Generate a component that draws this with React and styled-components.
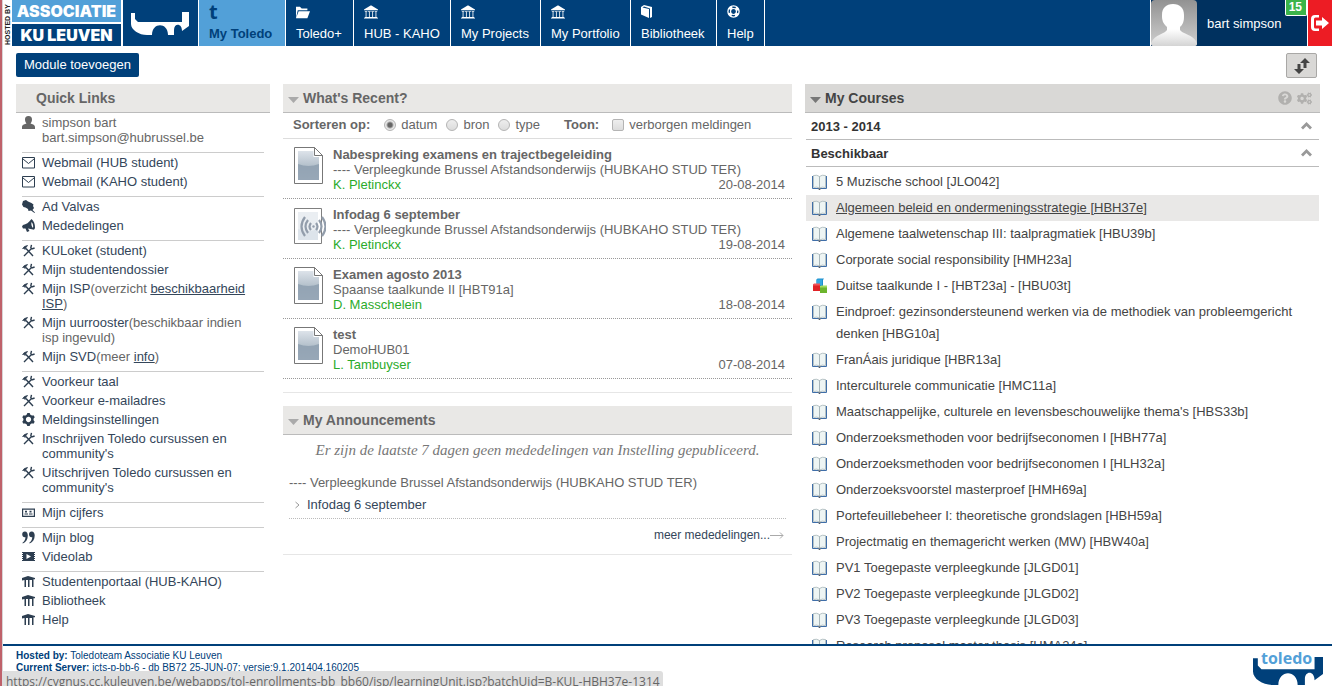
import React, { useState } from 'react';
import styled, { createGlobalStyle, css } from 'styled-components';
import { ImLibrary, ImFolderOpen, ImCog } from 'react-icons/im';
import { FaQuestionCircle, FaCogs } from 'react-icons/fa';

const GlobalStyle = createGlobalStyle`
  * {
    box-sizing: border-box;
  }

  body {
    margin: 0;
    background: #fff;
    color: #666;
    font-family: 'Liberation Sans', Arial, sans-serif;
    font-size: 13px;
    line-height: 15px;
  }

  ul {
    margin: 0;
    padding: 0;
    list-style: none;
  }

  a {
    color: #34465a;
    text-decoration: none;
  }

  button,
  input {
    margin: 0;
    font: inherit;
  }

  svg {
    display: block;
    flex: none;
  }
`;

const Page = styled.div`
  position: relative;
  display: flex;
  flex-direction: column;
  height: 100vh;
  overflow: hidden;
  border-left: 2px solid #bf616a;
  box-shadow: inset 1px 0 #d9d4d6;
  padding-left: 1px;
`;

/* header */

const TopBar = styled.header`
  display: flex;
  flex: none;
  height: 46px;
  background: #00407a;
  color: #fff;
`;

const HostedBy = styled.div`
  width: 9px;
  padding-top: 1px;
  background: #fff;
  color: #222;
  font-size: 7px;
  font-weight: bold;
  line-height: 9px;
  writing-mode: vertical-rl;
  transform: rotate(180deg);
  white-space: nowrap;
`;

const Association = styled.div`
  display: grid;
  grid-template-rows: 22px 22px;
  gap: 2px;
  width: 111px;
  border-right: 2px solid #fff;
  background: #fff;
`;

const AssociationLine = styled.div`
  display: flex;
  align-items: center;
  justify-content: center;
  background: ${(props) => props.$bg};
  font-family: Inter, 'Liberation Sans', sans-serif;
  font-size: 16px;
  font-weight: 900;
  line-height: 22px;
`;

const BridgeBox = styled.a`
  display: flex;
  width: 75px;
  padding: 12px 8px;
`;

const Nav = styled.nav`
  display: flex;
  border-left: 1px solid #fff;
`;

const Tab = styled.a`
  display: flex;
  flex-direction: column;
  justify-content: space-between;
  min-width: ${(props) => props.$width}px;
  padding: 5px 10px;
  border-right: 1px solid #fff;
  background: ${(props) => (props.$active ? '#52a0d8' : '#00407a')};
  color: ${(props) => (props.$active ? '#00407a' : '#fff')};
  font-weight: ${(props) => (props.$active ? 'bold' : 'normal')};
  white-space: nowrap;
`;

const TLetter = styled.span`
  font-family: 'Open Sans', sans-serif;
  font-size: 20px;
  font-weight: bold;
  line-height: 14px;
`;

const UserBox = styled.div`
  position: relative;
  display: flex;
  align-items: center;
  gap: 10px;
  width: 158px;
  margin-left: auto;
  border: 0 solid #fff;
  border-width: 0 1px;
  background: #00315f;
`;

const Badge = styled.span`
  position: absolute;
  top: 0;
  right: 0;
  padding: 0 4px 0 3px;
  border: 1px solid #fff;
  border-top: 0;
  border-radius: 0 0 2px 2px;
  background: #3bb44a;
  font-size: 12px;
  font-weight: bold;
  line-height: 15px;
`;

const Logout = styled.button`
  display: flex;
  align-items: center;
  justify-content: center;
  width: 24px;
  padding: 0;
  border: 0;
  background: #ed1c24;
`;

/* toolbar */

const Toolbar = styled.div`
  display: flex;
  flex: none;
  align-items: flex-start;
  justify-content: space-between;
  height: 38px;
  padding: 7px 15px 0 13px;
`;

const AddButton = styled.button`
  height: 24px;
  padding: 0 8px 1px;
  border: 0;
  border-radius: 2px;
  background: #00407a;
  color: #fff;
`;

const SortButton = styled.button`
  display: flex;
  align-items: center;
  justify-content: center;
  width: 31px;
  height: 25px;
  padding: 0;
  border: 1px solid #a9a8a6;
  border-radius: 2px;
  background: #d9d8d6;
`;

/* widgets */

const Content = styled.main`
  display: grid;
  flex: 1;
  grid-template-columns: 254fr 509fr 515fr;
  gap: 13px;
  align-items: start;
  min-height: 0;
  overflow: hidden;
  padding: 0 12px 0 13px;
`;

const Column = styled.div`
  display: grid;
  gap: 13px;
  min-width: 0;
`;

const Widget = styled.section`
  padding-bottom: ${(props) => props.$bottom || 13}px;
  border-bottom: 1px solid #e6e6e6;
`;

const WidgetHead = styled.div`
  display: flex;
  align-items: center;
  gap: 4px;
  height: 29px;
  padding: 0 8px 0 5px;
  border-bottom: 1px solid #bbb;
  background: #e9e8e6;

  ${(props) => props.$dark && css`
    background: #d9d8d6;
    color: #444;
  `}
`;

const WidgetTitle = styled.h2`
  flex: 1;
  margin: 0;
  padding-left: ${(props) => (props.$indent ? 15 : 0)}px;
  font-size: 14px;
  line-height: 16px;
`;

const Caret = styled.svg`
  width: 11px;
  height: 6px;
  margin-top: 3px;
  fill: ${(props) => props.$color || '#aaa'};
`;

const HeadIcons = styled.span`
  display: flex;
  gap: 5px;
  color: #b1b0ae;
`;

/* quick links */

const LinkGroup = styled.ul`
  margin: 0 6px;
  padding-bottom: 5px;

  & + & {
    border-top: 1px solid #ccc;
  }
`;

const LinkItem = styled.li`
  display: flex;
  gap: 7px;
  padding: 2px 8px 2px 0;
  color: ${(props) => (props.$plain ? '#666' : '#2d3e50')};

  svg {
    width: 13px;
    height: 13px;
    margin-top: 1px;
  }
`;

const LinkText = styled.span`
  color: #666;
`;

/* recent */

const SortForm = styled.form`
  display: flex;
  align-items: center;
  gap: 9px;
  height: 26px;
  padding: 0 10px 2px;
  border-bottom: 1px solid #ddd;
`;

const SortLabel = styled.strong`
  margin-right: ${(props) => props.$gap}px;
`;

const Choice = styled.label`
  display: flex;
  align-items: center;
  gap: 5px;
  margin-right: ${(props) => (props.$last ? 15 : 0)}px;
`;

const Mark = styled.input`
  appearance: none;
  width: 12px;
  height: 12px;
  border: 1px solid #b4b4b4;
  border-radius: ${(props) => (props.type === 'radio' ? '50%' : '2px')};
  background: linear-gradient(#eee, #dcdcdc);

  &[type='radio']:checked {
    background: radial-gradient(circle, #666 0 2px, #e8e8e8 4px);
  }
`;

const RecentItem = styled.li`
  display: grid;
  grid-template-columns: 30px 1fr;
  gap: 9px;
  padding: 8px 7px 6px 11px;
  border-bottom: 1px dotted #999;
`;

const RecentMeta = styled.div`
  display: flex;
  justify-content: space-between;
`;

const Author = styled.a`
  color: #2bab2b;
`;

/* announcements */

const Empty = styled.p`
  margin: 0;
  padding: 7px 0 16px;
  color: #777;
  font-family: Georgia, 'Liberation Serif', serif;
  font-size: 15px;
  font-style: italic;
  line-height: 17px;
  text-align: center;
`;

const AnnouncementBody = styled.div`
  padding: 0 6px;
`;

const Announcement = styled.a`
  display: flex;
  align-items: center;
  gap: 7px;
  padding: 7px 0 6px 6px;
  border-bottom: 1px dotted #bbb;
`;

const More = styled.a`
  display: flex;
  align-items: center;
  justify-content: flex-end;
  padding-top: 9px;
  padding-right: 2px;
  font-size: 12px;
`;

/* courses */

const Term = styled.button`
  display: flex;
  align-items: center;
  justify-content: space-between;
  width: 100%;
  height: 27px;
  padding: 0 7px 0 5px;
  border: 0;
  border-bottom: 1px solid #bbb;
  background: none;
  color: #333;
  font-weight: bold;
  text-align: left;
`;

const Courses = styled.div`
  padding: 0 1px;
`;

const CourseList = styled.ul`
  padding-top: 2px;
`;

const Course = styled.li`
  display: flex;
  gap: 9px;
  padding: 2px 6px;
  line-height: 22px;
  background: ${(props) => (props.$hover ? '#e9e8e7' : 'none')};

  a {
    color: #444;
    text-decoration: ${(props) => (props.$hover ? 'underline' : 'none')};
  }

  svg {
    margin-top: 3px;
  }
`;

/* footer */

const Footer = styled.footer`
  display: flex;
  flex: none;
  justify-content: space-between;
  height: 42px;
  padding: 4px 9px 0 13px;
  border-top: 2px solid #00407a;
  background: #fff;
  color: #00407a;
  font-size: 10px;
  line-height: 12px;
`;

const ToledoLogo = styled.div`
  position: relative;
  width: 70px;
  padding-top: 7px;
`;

const ToledoName = styled.span`
  position: absolute;
  top: 0;
  left: 8px;
  color: #52a0d8;
  font-family: 'Open Sans', sans-serif;
  font-size: 16px;
  font-weight: bold;
  line-height: 16px;
`;

const StatusBar = styled.div`
  position: absolute;
  bottom: 0;
  left: -2px;
  height: 15px;
  overflow: hidden;
  padding: 0 3px 0 6px;
  border-top-right-radius: 3px;
  background: #dedede;
  color: #666;
  font-family: 'Open Sans', sans-serif;
  font-size: 12px;
  line-height: 21px;
  white-space: nowrap;
`;

const Bridge = ({ width, height, color }) => (
  <svg width={width} height={height} viewBox="0 0 58 23" preserveAspectRatio="none" fill={color}>
    <path d="M0 1h4v6l3 3h44V0h7v14l-7 5c0-8-8-8-8-1v5h-6c0-13-16-13-16 0h-5C8 23 0 18 0 12z" />
  </svg>
);

const BookTabIcon = () => (
  <svg width="11" height="13" viewBox="0 0 11 13" fill="#fff">
    <path d="M0 2l3-2 8 2v10l-2 1V3.500L3 1.500 1.500 2.500 8 4v9L0 9.500z" />
  </svg>
);

const HelpIcon = () => (
  <svg width="13" height="13" viewBox="0 0 13 13" fill="none" stroke="#fff">
    <circle cx="6.500" cy="6.500" r="5.600" strokeWidth="1.300" />
    <circle cx="6.500" cy="6.500" r="3" strokeWidth="1.200" />
    <circle cx="6.500" cy="6.500" r="4.400" strokeWidth="3" strokeDasharray="3.400 3.511" strokeDashoffset="-1.750" />
  </svg>
);

const Avatar = () => (
  <svg width="46" height="46" viewBox="0 0 46 46">
    <defs>
      <linearGradient id="avatarBg" x1="0" y1="0" x2="0" y2="1">
        <stop offset="0" stopColor="#929292" />
        <stop offset="1" stopColor="#cfcfcf" />
      </linearGradient>
      <linearGradient id="avatarFg" x1="0" y1="0" x2="0" y2="1">
        <stop offset="0.600" stopColor="#fff" />
        <stop offset="1" stopColor="#d4d4d4" />
      </linearGradient>
    </defs>
    <rect width="46" height="46" rx="4" fill="url(#avatarBg)" />
    <path d="M22 4c7 0 11 4 11 11 0 4 0 5-1 8-1 2-2 3-3 4v3c2 4 13 4 17 13v1q0 2-3 2H3q-3 0-3-2v-1c4-9 14-9 16-13v-3c-2-2-3-3-4-5-1-3-1-4-1-7 0-7 4-11 11-11z" fill="url(#avatarFg)" />
  </svg>
);

const LogoutIcon = () => (
  <svg width="18" height="16" viewBox="0 0 18 16" fill="#fff">
    <path d="M8 0v2.500H4.500Q3 2.500 3 4v8q0 1.500 1.500 1.500H8V16H4Q0 16 0 12V4Q0 0 4 0z" />
    <path d="M5 5.500h6V2l7 6-7 6v-3.500H5z" />
  </svg>
);

const SwapIcon = () => (
  <svg width="16" height="16" viewBox="0 0 16 16" fill="#444">
    <path d="M11 0l5 5h-3.500v5h-3V5H6zM3.500 6h3v5H10l-5 5-5-5h3.500z" />
  </svg>
);

const UserIcon = () => (
  <svg viewBox="0 0 13 13" fill="currentColor">
    <path d="M6.500 0C9 0 10 1.500 10 3.500 10 5.500 9 7 8.500 7.500 10 8 13 8.500 13 11v2H0v-2c0-2.500 3-3 4.500-3.500C4 7 3 5.500 3 3.500 3 1.500 4 0 6.500 0z" />
  </svg>
);

const MailIcon = () => (
  <svg viewBox="0 0 13 13" fill="none" stroke="currentColor">
    <path d="M.5 1.500h12v10.500H.5zM1 3l5.500 4.500L12 3" />
  </svg>
);

const PinIcon = () => (
  <svg viewBox="0 0 13 13" fill="currentColor">
    <path d="M1 1l3-1 2 1.500L9.500 3l2 1.500-.5 1.500 1 2-1.500 2 2.500 2.500-.5.500L9 10.500 6.500 11 6 9 3.500 7.500 1.500 7 0 4.500z" />
  </svg>
);

const MegaphoneIcon = () => (
  <svg viewBox="0 0 13 13" fill="currentColor">
    <path fillRule="evenodd" d="M9.500 0C12 2 13 5 13 8.500c0 1.500-1 2.500-2 2L6 9.500l1.500 2.500L5 13 3.500 9.500H1L0 7.500l1-1.500c3-.5 6-2.500 8.500-6zM9.500 3C9 5 9.500 7.500 11 9c.5-2 0-4.500-1.500-6z" />
  </svg>
);

const ToolsIcon = () => (
  <svg viewBox="0 0 13 13" fill="none" stroke="currentColor" strokeWidth="1.400">
    <path d="M4 4.500l7 7.500M2 12l7-7" />
    <path d="M.5 5Q1.500 2 5.500 1.500L4 3.500 3 5.500 2 4.500" fill="currentColor" strokeWidth=".8" />
    <path d="M9.500.8L8.800 3.800 9.800 5l2.800-1" />
  </svg>
);

const GradesIcon = () => (
  <svg viewBox="0 0 13 13" fill="currentColor">
    <path fillRule="evenodd" d="M0 2.500h13v8.500H0zM1.200 3.700v6.100h10.600V3.700z" />
    <path d="M3 4.800h2v1.700H3zM7.500 4.800h2v1.700h-2zM2.500 7.500H6v1H2.500zM7 7.500h3.500v1H7z" />
  </svg>
);

const QuoteIcon = () => (
  <svg viewBox="0 0 13 13" fill="currentColor">
    <path d="M2.800.5C5 .5 5.800 2.200 5.800 4.500 5.800 8.500 4 11 .8 12.500L.5 11.800C2.300 10.500 3.300 9 3.500 6.200 1.500 6.500.2 5.300.2 3.300.2 1.600 1.200.5 2.800.5zM9.600.5C11.800.5 12.700 2.200 12.700 4.500c0 4-1.900 6.500-5.100 8l-.3-.7c1.800-1.300 2.800-2.800 3-5.600C8.300 6.500 7 5.300 7 3.300 7 1.600 8 .5 9.600.5z" />
  </svg>
);

const FilmIcon = () => (
  <svg viewBox="0 0 13 13" fill="currentColor">
    <path fillRule="evenodd" d="M0 2h13v1h-1v1h1v1h-1v1h1v1h-1v1h1v1h-1v1h1v1H0v-1h1V9H0V8h1V7H0V6h1V5H0V4h1V3H0zM4.500 4v5l4.500-2.500z" />
  </svg>
);

const PortalIcon = () => (
  <svg viewBox="0 0 13 13" fill="currentColor">
    <path d="M0 4V3L6 1l7 2v1.300H11.500V12h-1.500V5H7.500v7H6V5H4v7H2.500V5L0 5.500z" />
  </svg>
);

const PageIcon = ({ sound }) => (
  <svg width="32" height="38" viewBox="0 0 32 38">
    <defs>
      <linearGradient id="sheet" x1="0" y1="0" x2="0" y2="1">
        <stop offset="0" stopColor="#dde3ea" />
        <stop offset="0.500" stopColor="#b5c1cc" />
        <stop offset="1" stopColor="#c3cdd6" />
      </linearGradient>
    </defs>
    {sound ? (
      <>
        <path d="M.5 1.500h27v35H.5z" fill="#fff" stroke="#808080" />
        <path d="M4 5h20v28H4z" fill="#eaeef2" />
        <path d="M4 22q10 4 20 0v11H4z" fill="#dde4eb" />
        <g fill="none" stroke="#929dab" strokeWidth="2.200">
          <path d="M17 16q-3 3.500 0 7M22 16q3 3.500 0 7M14 13q-5 6.500 0 13M25 13q5 6.500 0 13M11 10q-7 9.500 0 19M28 10q7 9.500 0 19" />
        </g>
        <circle cx="19.500" cy="19.500" r="1.200" fill="#929dab" />
      </>
    ) : (
      <>
        <path d="M.5.500h20l8 8v28H.5z" fill="#fff" stroke="#777" />
        <path d="M4 4h15.500v6H25v23H4z" fill="url(#sheet)" />
        <path d="M4 17q10.500 4 21 0v16H4z" fill="#8497a9" fillOpacity=".7" />
        <path d="M20.500.500v8h8z" fill="#fff" stroke="#777" />
      </>
    )}
  </svg>
);

const BookIcon = () => (
  <svg width="15" height="16" viewBox="0 0 15 16">
    <path d="M.5 2v12.500h6l1 1 1-1h6V2" fill="#fff" stroke="#3f6ea8" />
    <path d="M1.500 1.500Q5 .5 7.500 2.500V14Q5 12.500 1.500 13.500zM13.500 1.500Q10 .5 7.500 2.500V14q2.500-1.500 6-.5z" fill="#eef5f4" stroke="#a4b4b8" strokeWidth=".8" />
    <path d="M6.500 14.500h2v1h-2z" fill="#222" />
  </svg>
);

const CubesIcon = () => (
  <svg width="15" height="16" viewBox="0 0 15 16">
    <path d="M4.500 1.500l1-1H12l-1 1.500v6H4.500z" fill="#1c8fce" />
    <path d="M4.500 1.500H10V7H4.500z" fill="#35a8e0" />
    <path d="M1 6.500h7V13H1z" fill="#e02226" />
    <path d="M1 6.500l1-1h6v2H1z" fill="#f0565a" />
    <path d="M8 8.500h7V15H8z" fill="#6cb52d" />
    <path d="M8 8.500l1-1h6v2H8z" fill="#a2dc60" />
  </svg>
);

const UpIcon = () => (
  <svg width="11" height="8" viewBox="0 0 11 8" fill="none" stroke="#999" strokeWidth="2.800">
    <path d="M1 6.500l4.500-4.500L10 6.500" />
  </svg>
);

const tabs = [
  { label: 'My Toledo', icon: <TLetter aria-hidden="true">t</TLetter>, width: 87, active: true },
  { label: 'Toledo+', icon: <ImFolderOpen size={14} />, width: 68 },
  { label: 'HUB - KAHO', icon: <ImLibrary size={14} />, width: 97 },
  { label: 'My Projects', icon: <ImLibrary size={14} />, width: 90 },
  { label: 'My Portfolio', icon: <ImLibrary size={14} />, width: 90 },
  { label: 'Bibliotheek', icon: <BookTabIcon />, width: 86 },
  { label: 'Help', icon: <HelpIcon />, width: 48 },
];

const quickLinks = [
  [
    { icon: MailIcon, label: 'Webmail (HUB student)' },
    { icon: MailIcon, label: 'Webmail (KAHO student)' },
  ],
  [
    { icon: PinIcon, label: 'Ad Valvas' },
    { icon: MegaphoneIcon, label: 'Mededelingen' },
  ],
  [
    { icon: ToolsIcon, label: 'KULoket (student)' },
    { icon: ToolsIcon, label: 'Mijn studentendossier' },
    { icon: ToolsIcon, label: 'Mijn ISP', note: 'overzicht ', link: 'beschikbaarheid ISP' },
    { icon: ToolsIcon, label: 'Mijn uurrooster', note: 'beschikbaar indien isp ingevuld' },
    { icon: ToolsIcon, label: 'Mijn SVD', note: 'meer ', link: 'info' },
  ],
  [
    { icon: ToolsIcon, label: 'Voorkeur taal' },
    { icon: ToolsIcon, label: 'Voorkeur e-mailadres' },
    { icon: ImCog, label: 'Meldingsinstellingen' },
    { icon: ToolsIcon, label: "Inschrijven Toledo cursussen en community's" },
    { icon: ToolsIcon, label: "Uitschrijven Toledo cursussen en community's" },
  ],
  [{ icon: GradesIcon, label: 'Mijn cijfers' }],
  [
    { icon: QuoteIcon, label: 'Mijn blog' },
    { icon: FilmIcon, label: 'Videolab' },
  ],
  [
    { icon: PortalIcon, label: 'Studentenportaal (HUB-KAHO)' },
    { icon: PortalIcon, label: 'Bibliotheek' },
    { icon: PortalIcon, label: 'Help' },
  ],
];

const hub = '---- Verpleegkunde Brussel Afstandsonderwijs (HUBKAHO STUD TER)';

const recent = [
  { title: 'Nabespreking examens en trajectbegeleiding', course: hub, author: 'K. Pletinckx', date: '20-08-2014' },
  { title: 'Infodag 6 september', course: hub, author: 'K. Pletinckx', date: '19-08-2014', sound: true },
  { title: 'Examen agosto 2013', course: 'Spaanse taalkunde II [HBT91a]', author: 'D. Masschelein', date: '18-08-2014' },
  { title: 'test', course: 'DemoHUB01', author: 'L. Tambuyser', date: '07-08-2014' },
];

const courses = [
  '5 Muzische school [JLO042]',
  'Algemeen beleid en ondermeningsstrategie [HBH37e]',
  'Algemene taalwetenschap III: taalpragmatiek [HBU39b]',
  'Corporate social responsibility [HMH23a]',
  'Duitse taalkunde I - [HBT23a] - [HBU03t]',
  'Eindproef: gezinsondersteunend werken via de methodiek van probleemgericht denken [HBG10a]',
  'FranÁais juridique [HBR13a]',
  'Interculturele communicatie [HMC11a]',
  "Maatschappelijke, culturele en levensbeschouwelijke thema's [HBS33b]",
  'Onderzoeksmethoden voor bedrijfseconomen I [HBH77a]',
  'Onderzoeksmethoden voor bedrijfseconomen I [HLH32a]',
  'Onderzoeksvoorstel masterproef [HMH69a]',
  'Portefeuillebeheer I: theoretische grondslagen [HBH59a]',
  'Projectmatig en themagericht werken (MW) [HBW40a]',
  'PV1 Toegepaste verpleegkunde [JLGD01]',
  'PV2 Toegepaste verpleegkunde [JLGD02]',
  'PV3 Toegepaste verpleegkunde [JLGD03]',
  'Research proposal master thesis [HMA24a]',
];

function Header() {
  return (
    <TopBar>
      <HostedBy>HOSTED BY</HostedBy>
      <Association>
        <AssociationLine $bg="#52a0d8">ASSOCIATIE</AssociationLine>
        <AssociationLine $bg="#00407a">KU LEUVEN</AssociationLine>
      </Association>
      <BridgeBox href="#" aria-label="Toledo">
        <Bridge width={58} height={23} color="#fff" />
      </BridgeBox>
      <Nav>
        {tabs.map((tab) => (
          <Tab key={tab.label} href="#" $active={tab.active} $width={tab.width}>
            {tab.icon}
            {tab.label}
          </Tab>
        ))}
      </Nav>
      <UserBox>
        <Avatar />
        <span>bart simpson</span>
        <Badge>15</Badge>
      </UserBox>
      <Logout aria-label="Afmelden">
        <LogoutIcon />
      </Logout>
    </TopBar>
  );
}

function Head({ title, caret = true, dark, children }) {
  return (
    <WidgetHead $dark={dark}>
      {caret && (
        <Caret viewBox="0 0 11 6" $color={dark && '#777'}>
          <path d="M0 0h11L5.500 6z" />
        </Caret>
      )}
      <WidgetTitle $indent={!caret}>{title}</WidgetTitle>
      {children}
    </WidgetHead>
  );
}

function QuickLinks() {
  return (
    <Widget>
      <Head title="Quick Links" caret={false} />
      <LinkGroup>
        <LinkItem $plain>
          <UserIcon />
          <LinkText>
            simpson bart
            <br />
            bart.simpson@hubrussel.be
          </LinkText>
        </LinkItem>
      </LinkGroup>
      {quickLinks.map((group) => (
        <LinkGroup key={group[0].label}>
          {group.map(({ icon: Icon, label, note, link }) => (
            <LinkItem key={label}>
              <Icon />
              <LinkText>
                <a href="#">{label}</a>
                {note && `(${note}`}
                {link && <a href="#"><u>{link}</u></a>}
                {note && ')'}
              </LinkText>
            </LinkItem>
          ))}
        </LinkGroup>
      ))}
    </Widget>
  );
}

function Recent() {
  const [sort, setSort] = useState('datum');
  const [hidden, setHidden] = useState(false);

  return (
    <Widget>
      <Head title="What's Recent?" />
      <SortForm>
        <SortLabel $gap={5}>Sorteren op:</SortLabel>
        {['datum', 'bron', 'type'].map((name) => (
          <Choice key={name} $last={name === 'type'}>
            <Mark type="radio" name="sort" checked={sort === name} onChange={() => setSort(name)} />
            {name}
          </Choice>
        ))}
        <SortLabel $gap={4}>Toon:</SortLabel>
        <Choice>
          <Mark type="checkbox" checked={hidden} onChange={(e) => setHidden(e.target.checked)} />
          verborgen meldingen
        </Choice>
      </SortForm>
      <ul>
        {recent.map((item) => (
          <RecentItem key={item.title}>
            <PageIcon sound={item.sound} />
            <div>
              <strong>{item.title}</strong>
              <div>{item.course}</div>
              <RecentMeta>
                <Author href="#">{item.author}</Author>
                <span>{item.date}</span>
              </RecentMeta>
            </div>
          </RecentItem>
        ))}
      </ul>
    </Widget>
  );
}

function Announcements() {
  return (
    <Widget $bottom={11}>
      <Head title="My Announcements" />
      <Empty>Er zijn de laatste 7 dagen geen mededelingen van Instelling gepubliceerd.</Empty>
      <AnnouncementBody>
        <div>{hub}</div>
        <Announcement href="#">
          <svg width="5" height="8" viewBox="0 0 5 8" fill="none" stroke="#999">
            <path d="M.5 1l3.500 3L.5 7" />
          </svg>
          Infodag 6 september
        </Announcement>
        <More href="#">
          meer mededelingen...
          <svg width="14" height="7" viewBox="0 0 14 7" fill="none" stroke="#aaa">
            <path d="M0 3.500h13M10 .5l3 3-3 3" />
          </svg>
        </More>
      </AnnouncementBody>
    </Widget>
  );
}

function MyCourses() {
  return (
    <Widget>
      <Head title="My Courses" dark>
        <HeadIcons>
          <FaQuestionCircle size={14} />
          <FaCogs size={15} />
        </HeadIcons>
      </Head>
      <Courses>
        <Term>
          2013 - 2014
          <UpIcon />
        </Term>
        <Term>
          Beschikbaar
          <UpIcon />
        </Term>
        <CourseList>
          {courses.map((name, i) => (
            <Course key={name} $hover={i === 1}>
              {i === 4 ? <CubesIcon /> : <BookIcon />}
              <a href="#">{name}</a>
            </Course>
          ))}
        </CourseList>
      </Courses>
    </Widget>
  );
}

function App() {
  return (
    <>
      <GlobalStyle />
      <Page>
        <Header />
        <Toolbar>
          <AddButton>Module toevoegen</AddButton>
          <SortButton aria-label="Volgorde wijzigen">
            <SwapIcon />
          </SortButton>
        </Toolbar>
        <Content>
          <QuickLinks />
          <Column>
            <Recent />
            <Announcements />
          </Column>
          <MyCourses />
        </Content>
        <Footer>
          <div>
            <strong>Hosted by:</strong> Toledoteam Associatie KU Leuven
            <br />
            <strong>Current Server:</strong> icts-p-bb-6 - db BB72 25-JUN-07; versie:9.1.201404.160205
          </div>
          <ToledoLogo>
            <ToledoName>toledo</ToledoName>
            <Bridge width={70} height={28} color="#00407a" />
          </ToledoLogo>
        </Footer>
        <StatusBar>https://cygnus.cc.kuleuven.be/webapps/tol-enrollments-bb_bb60/jsp/learningUnit.jsp?batchUid=B-KUL-HBH37e-1314</StatusBar>
      </Page>
    </>
  );
}

export default App;
